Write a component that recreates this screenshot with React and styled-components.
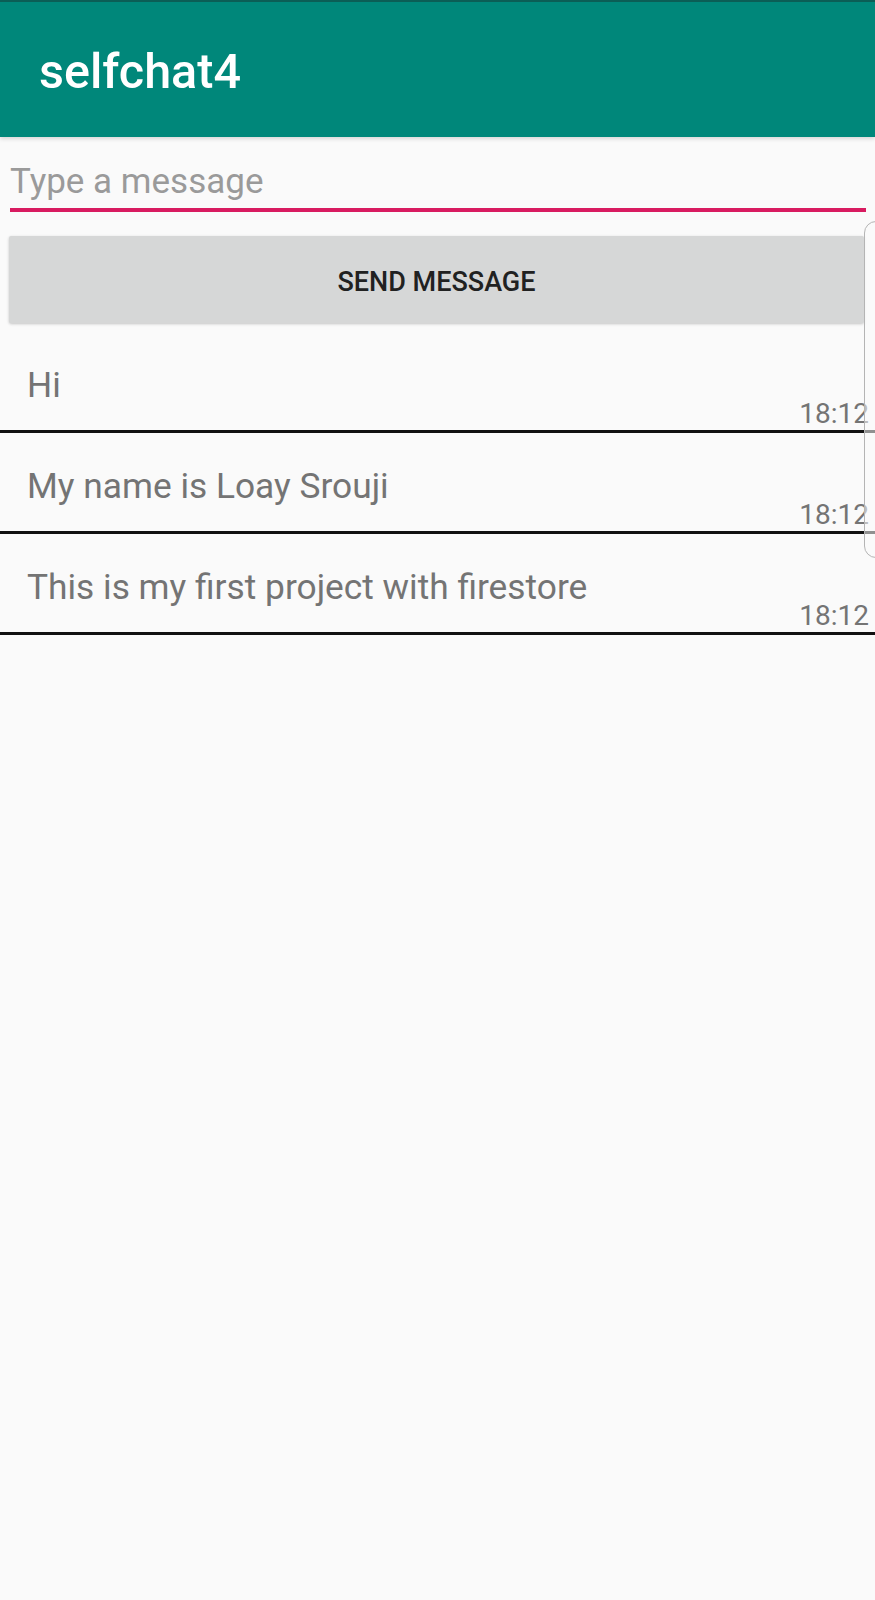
import React from "react";
import styled, { createGlobalStyle } from "styled-components";

const GlobalStyle = createGlobalStyle`
  html, body {
    margin: 0;
    padding: 0;
    background: #fafafa;
  }
  body {
    font-family: Roboto, "Noto Sans", "Liberation Sans", sans-serif;
  }
  * { box-sizing: border-box; }
`;

const Screen = styled.div`
  position: relative;
  min-height: 1600px;
  background: #fafafa;
  overflow: hidden;
`;

const AppBar = styled.header`
  position: relative;
  z-index: 1;
  height: 137px;
  display: flex;
  align-items: center;
  padding-left: 39px;
  background: #00877a;
  border-top: 2px solid #0b5e56;
  box-shadow: 0 2px 4px rgba(0, 0, 0, 0.14);
`;

const Title = styled.h1`
  margin: 5px 0 0;
  font-family: Roboto, sans-serif;
  font-weight: 500;
  font-size: 48.5px;
  line-height: 56px;
  color: #ffffff;
`;

const Composer = styled.section`
  display: flex;
  flex-direction: column;
  padding-top: 17px;
`;

const MessageInput = styled.input`
  display: block;
  height: 54px;
  margin: 0 9px 0 10px;
  padding: 0;
  border: none;
  border-bottom: 4px solid #d81b60;
  background: transparent;
  font-family: Roboto, sans-serif;
  font-size: 35px;
  color: #333;
  outline: none;
  box-sizing: content-box;

  &::placeholder {
    color: #9a9a9a;
    opacity: 1;
  }
`;

const SendButton = styled.button`
  height: 87px;
  margin: 24px 11px 0 9px;
  padding: 4px 0 0;
  border: none;
  border-radius: 2px;
  background: #d6d7d7;
  box-shadow: 0 1px 3px rgba(0, 0, 0, 0.22);
  font-family: Roboto, sans-serif;
  font-weight: 500;
  font-size: 27px;
  color: #212121;
  text-transform: uppercase;
  cursor: pointer;
`;

const MessageList = styled.ul`
  list-style: none;
  margin: 9px 0 0;
  padding: 0;
`;

const Row = styled.li`
  height: 101px;
  padding: 32px 6px 0 0;
  display: grid;
  grid-template-columns: 1fr;
  grid-template-rows: 1fr;
  border-bottom: 3px solid #111111;
`;

const MessageText = styled.span`
  grid-area: 1 / 1;
  align-self: start;
  padding-left: 27px;
  font-size: 35.3px;
  line-height: 42px;
  color: #747474;
`;

const Time = styled.span`
  grid-area: 1 / 1;
  align-self: end;
  justify-self: end;
  font-size: 28px;
  line-height: 32px;
  color: #747474;
`;

const EdgeHandle = styled.div`
  position: absolute;
  top: 221px;
  left: 864px;
  width: 30px;
  height: 337px;
  border: 1.5px solid #b4b4b4;
  border-radius: 12px 0 0 12px;
  background: rgba(250, 250, 250, 0.55);
`;

const messages = [
  { id: 1, text: "Hi", time: "18:12" },
  { id: 2, text: "My name is Loay Srouji", time: "18:12" },
  { id: 3, text: "This is my first project with firestore", time: "18:12" },
];

export default function App() {
  return (
    <Screen>
      <GlobalStyle />
      <AppBar>
        <Title>selfchat4</Title>
      </AppBar>
      <Composer>
        <MessageInput placeholder="Type a message" />
        <SendButton>Send message</SendButton>
      </Composer>
      <MessageList>
        {messages.map((m) => (
          <Row key={m.id}>
            <MessageText>{m.text}</MessageText>
            <Time>{m.time}</Time>
          </Row>
        ))}
      </MessageList>
      <EdgeHandle />
    </Screen>
  );
}
